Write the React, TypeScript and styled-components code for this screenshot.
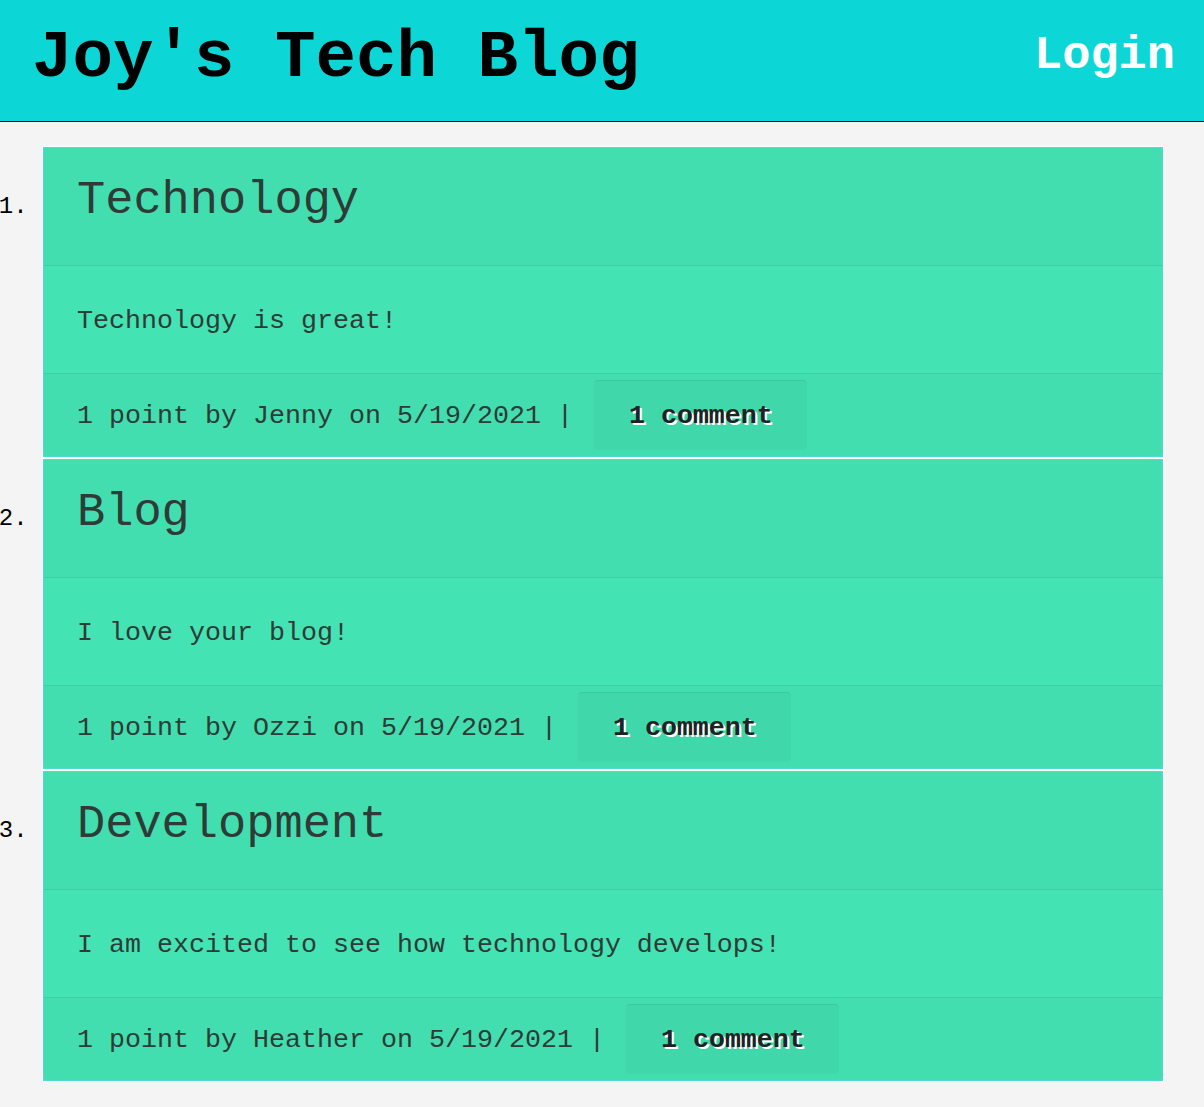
import React from "react";
import styled, { createGlobalStyle } from "styled-components";

const mono = `"Courier New", Courier, "Nimbus Mono PS", FreeMono, "Liberation Mono", monospace`;

const Global = createGlobalStyle`
  html, body { margin: 0; padding: 0; background: #f4f4f4; }
  body { font-family: ${mono}; color: #2e3b36; }
  * { box-sizing: border-box; }
`;

const Header = styled.header`
  height: 122px;
  background: #0cd6d6;
  border-bottom: 1px solid #111;
  display: flex;
  align-items: center;
  justify-content: space-between;
  padding: 0 29px 6px 32px;
`;

const Brand = styled.h1`
  margin: 0;
  font-size: 67.5px;
  font-weight: 700;
  color: #000;
  letter-spacing: 0;
`;

const LoginLink = styled.a`
  font-size: 47px;
  font-weight: 700;
  color: #fff;
  text-decoration: none;
  margin-top: -4px;
`;

const PostList = styled.ol`
  margin: 24px 40px 0 0;
  padding: 0 0 0 42px;
  list-style: decimal;
`;

const PostItem = styled.li`
  font-family: ${mono};
  font-size: 24px;
  color: #000;
  padding: 1px;
  background: #4fdcd0;
  border: 1px solid #fff;
  &::marker { font-size: 24px; }
`;

const Card = styled.article`
  background: #44e3b3;
  border-radius: 4px;
  overflow: hidden;
`;

const CardHeader = styled.div`
  height: 118px;
  background: #42deb0;
  border-bottom: 1px solid #3ccfa4;
  padding: 23px 33px 0;
`;

const Title = styled.h2`
  margin: 0;
  font-size: 47px;
  font-weight: 400;
  line-height: 60px;
  color: #2e3b36;
`;

const CardBody = styled.div`
  height: 108px;
  border-bottom: 1px solid #3ccfa4;
  padding: 2px 33px 0;
  display: flex;
  align-items: center;
  font-size: 26.67px;
  color: #2e3b36;
`;

const CardFooter = styled.div`
  height: 82px;
  background: #42deb0;
  padding: 6px 33px 0;
  display: flex;
  align-items: flex-start;
  font-size: 26.67px;
  color: #2e3b36;
`;

const Meta = styled.span`
  line-height: 72px;
  margin-right: 21px;
  white-space: pre;
`;

const CommentButton = styled.a`
  display: inline-flex;
  align-items: center;
  height: 70px;
  padding: 0 34px 0 35px;
  background: #40d8aa;
  border-top: 1px solid #3cc99e;
  border-radius: 4px;
  font-weight: 700;
  font-size: 26.67px;
  color: #222;
  text-shadow: 2px 2px 0 #fff;
  text-decoration: none;
`;

const posts = [
  { title: "Technology", body: "Technology is great!", author: "Jenny" },
  { title: "Blog", body: "I love your blog!", author: "Ozzi" },
  { title: "Development", body: "I am excited to see how technology develops!", author: "Heather" },
];

export default function App() {
  return (
    <>
      <Global />
      <Header>
        <Brand>Joy's Tech Blog</Brand>
        <LoginLink href="#">Login</LoginLink>
      </Header>
      <PostList>
        {posts.map((p) => (
          <PostItem key={p.title}>
            <Card>
              <CardHeader>
                <Title>{p.title}</Title>
              </CardHeader>
              <CardBody>{p.body}</CardBody>
              <CardFooter>
                <Meta>{`1 point by ${p.author} on 5/19/2021 |`}</Meta>
                <CommentButton href="#">1 comment</CommentButton>
              </CardFooter>
            </Card>
          </PostItem>
        ))}
      </PostList>
    </>
  );
}
